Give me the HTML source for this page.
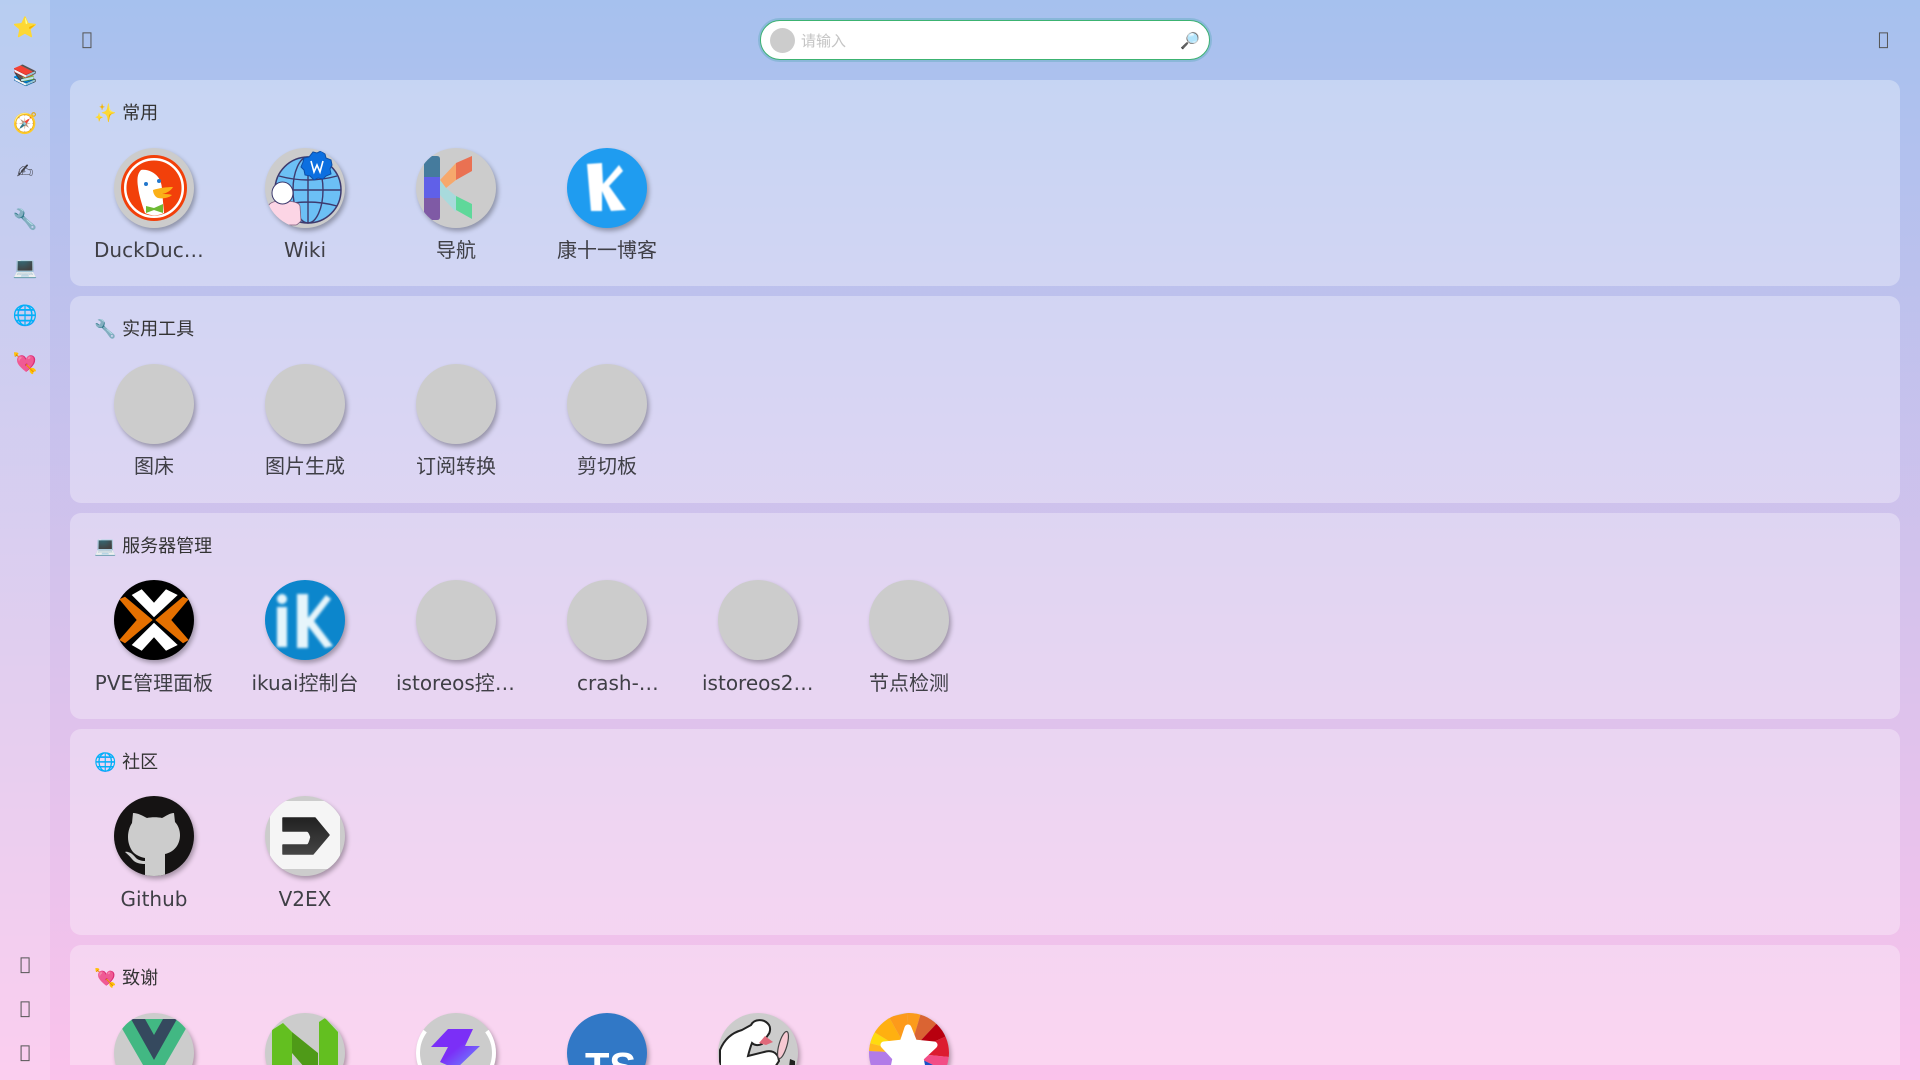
<!DOCTYPE html>
<html lang="zh"><head><meta charset="utf-8"><title>导航</title>
<style>
*{box-sizing:border-box;margin:0;padding:0}
html,body{width:1920px;height:1080px;overflow:hidden}
body{position:relative;background:linear-gradient(to bottom,#a6c1ee,#fbc2eb);font-family:"DejaVu Sans","Noto Sans CJK SC",sans-serif;color:#3f3f46}
.side{position:absolute;left:0;top:0;width:50px;height:1080px;background:rgba(255,255,255,.2)}
.side span{position:absolute;left:0;width:50px;text-align:center;font-size:20px;line-height:24px}
.side .t{font-size:18px;color:#555}
.tf{position:absolute;font-size:18px;line-height:24px;color:#555}
.search{position:absolute;left:760px;top:20px;width:450px;height:40px;background:#fff;border:1px solid #3cb371;border-radius:20px;box-shadow:0 0 0 2px rgba(100,170,190,.45)}
.search i{position:absolute;left:9px;top:7px;width:25px;height:25px;border-radius:50%;background:#ccc}
.search b{position:absolute;left:40px;top:9px;font-weight:400;font-size:15px;line-height:22px;color:#c4c4c4}
.search u{position:absolute;right:9px;top:8px;font-size:16px;line-height:24px;text-decoration:none}
.main{position:absolute;left:70px;top:80px;width:1830px;height:985px;overflow:hidden}
.card{position:relative;height:206.25px;margin-bottom:10px;background:rgba(255,255,255,.32);border-radius:11px}
.card h3{position:absolute;left:24px;top:21px;font-size:18px;line-height:26px;font-weight:400;color:#333;white-space:pre}
.it{position:absolute;top:67.5px;width:120px;margin-left:-1px}
.ic{display:block;width:80px;height:80px;margin-left:20px;border-radius:50%;background:#ccc;overflow:hidden;box-shadow:2px 3px 5px rgba(0,0,0,.3)}
.ic svg{display:block;width:80px;height:80px}
.it p{margin-top:8.5px;font-size:20px;line-height:28px;text-align:center;white-space:nowrap;overflow:hidden;text-overflow:ellipsis}
</style></head><body>
<div class="side">
<span style="top:15px">⭐</span><span style="top:63px">📚</span><span style="top:111px">🧭</span><span style="top:159px">✍</span><span style="top:207px">🔧</span><span style="top:255px">💻</span><span style="top:303px">🌐</span><span style="top:351px">💘</span>
<span class="t" style="top:953px">&#xe6a0;</span><span class="t" style="top:997px">&#xe6a1;</span><span class="t" style="top:1041px">&#xe6a2;</span>
</div>
<span class="tf" style="left:81.500px;top:28px">&#xe6a3;</span>
<span class="tf" style="left:1878px;top:28px">&#xe6a4;</span>
<div class="search"><i></i><b>请输入</b><u>🔎</u></div>
<div class="main">

<div class="card"><h3>✨ 常用</h3>
<div class="it" style="left:25px"><span class="ic"><svg viewBox="0 0 80 80"><circle cx="40" cy="40" r="33" fill="#f2400a"/><circle cx="40" cy="40" r="28.800" fill="none" stroke="#fff" stroke-width="2.500"/><path d="M27 22c6-1 13 2 17 7 3 4 4 9 4 13l2 23c-6 3-13 3-19 0-3-8-6-18-7-26-1-7-1-13 3-17z" fill="#fff"/><circle cx="32" cy="36" r="2" fill="#2277cc"/><circle cx="45" cy="33" r="2" fill="#2277cc"/><path d="M39 42c6-2 14-3 20-3-2 4-8 7-12 7 4 0 8 0 11 1-3 3-10 4-14 3-3-1-5-5-5-8z" fill="#fbb017"/><path d="M32 58l8 2 9-4v9l-9-3-8 3z" fill="#6eba34"/></svg></span><p>DuckDuckGo</p></div>
<div class="it" style="left:176px"><span class="ic"><svg viewBox="0 0 80 80"><circle cx="43" cy="42" r="33" fill="#6cc0f5" stroke="#3d3a6e" stroke-width="1.500"/><g fill="none" stroke="#3d3a6e" stroke-width="1.400"><ellipse cx="43" cy="42" rx="15" ry="33"/><path d="M43 9v66M14 28q29 8 58 0M10 42h66M14 58q29-8 58 0"/></g><path d="M3 60c0-5 6-7 14-7s17 1 18 5l1 15c-2 2-4 4-5 4H13C7 75 3 68 3 60z" fill="#fcd5e5" stroke="#7c5b7c" stroke-width=".8"/><ellipse cx="17.500" cy="45" rx="10.500" ry="11" fill="#fff" stroke="#3d3a6e" stroke-width="1"/><path d="M48 4l4 1 4-2 4 3 1 4 5 2 1 5-2 4 1 5-5 2-3 3-5-1-4 2-4-4-5-1-1-5-3-3 2-5 1-4 5-1z" fill="#0c6fe0" stroke="#0d4ea6" stroke-width="1"/><path d="M46 13l3 11 3-7 3 7 3-11" fill="none" stroke="#fff" stroke-width="1.600"/></svg></span><p>Wiki</p></div>
<div class="it" style="left:327px"><span class="ic"><svg viewBox="0 0 80 80"><path d="M8 8h13q3 0 3 3v18H8z" fill="#457b9d"/><path d="M8 29h16v21H8z" fill="#6060e8"/><path d="M8 50h16v19q0 3-3 3h-8q-5-2-5-8z" fill="#7f5aa5"/><path d="M24 32l16-17v17l-10 8z" fill="#f6a86c"/><path d="M40 15l16-7v15l-16 9z" fill="#ea7152"/><path d="M24 32l6 8 10 8v16L24 47z" fill="#a8dadc"/><path d="M40 48l16 8v15l-16-9z" fill="#5fd89a"/></svg></span><p>导航</p></div>
<div class="it" style="left:478px"><span class="ic" style="background:#1f9cf0"><svg viewBox="0 0 80 80"><defs><filter id="bk"><feGaussianBlur stdDeviation=".8"/></filter></defs><path d="M20 16l15-1 1 21 16-19 4 6-14 15 17 24-15 1-9-20v20H24z" fill="#fff" filter="url(#bk)"/></svg></span><p>康十一博客</p></div>
</div>

<div class="card"><h3>🔧 实用工具</h3>
<div class="it" style="left:25px"><span class="ic"></span><p>图床</p></div>
<div class="it" style="left:176px"><span class="ic"></span><p>图片生成</p></div>
<div class="it" style="left:327px"><span class="ic"></span><p>订阅转换</p></div>
<div class="it" style="left:478px"><span class="ic"></span><p>剪切板</p></div>
</div>

<div class="card"><h3>💻 服务器管理</h3>
<div class="it" style="left:25px"><span class="ic" style="background:#000"><svg viewBox="0 0 80 80"><path d="M17.700 15l10-5.700L40 22.700 52 9.300 63.700 15 40 37.300zM17.700 65l10 5.700L40 57.300 52 70.700 63.700 65 40 42.700z" fill="#fff"/><path d="M5.300 19.300L11 16.700 38.700 40 11 63.300 5.300 60 22.700 40zM74.700 19.300L69 16.700 41.300 40 69 63.300 74.700 60 57.300 40z" fill="#e57000"/></svg></span><p>PVE管理面板</p></div>
<div class="it" style="left:176px"><span class="ic" style="background:#0c86cc"><svg viewBox="0 0 80 80"><defs><filter id="ik"><feGaussianBlur stdDeviation="1.300"/></filter></defs><g fill="#e6f5fb" filter="url(#ik)"><circle cx="17" cy="19" r="5"/><path d="M12 27h10v40H12zM32 14h11v24l18-23 5 4-17 22 19 25-8 2-17-22v22H32z"/></g></svg></span><p>ikuai控制台</p></div>
<div class="it" style="left:327px"><span class="ic"></span><p>istoreos控制台</p></div>
<div class="it" style="left:478px"><span class="ic"></span><p style="padding-left:30px;text-align:left">crash-…</p></div>
<div class="it" style="left:629px"><span class="ic"></span><p style="padding-left:4px">istoreos2控制台</p></div>
<div class="it" style="left:780px"><span class="ic"></span><p>节点检测</p></div>
</div>

<div class="card"><h3>🌐 社区</h3>
<div class="it" style="left:25px"><span class="ic" style="background:#151313"><svg viewBox="0 0 80 80"><path d="M19 17c5 0 10 3 14 5 4-1 11-1 15 0 4-2 8-5 12-5l1 9c3 3 5 8 5 13 0 10-6 17-15 19v22H31V62c-5-1-9-3-12-6-3-4-5-9-5-15 0-6 2-11 4-14z" fill="#ccc"/><path d="M11 56c4-1 8 2 11 6 2 2 6 3 9 3v3c-5 0-10-1-13-5-2-3-5-5-7-7z" fill="#ccc"/></svg></span><p>Github</p></div>
<div class="it" style="left:176px"><span class="ic"><svg viewBox="0 0 80 80"><defs><linearGradient id="vg" x1="0" y1="0" x2="0" y2="1"><stop offset="0" stop-color="#222"/><stop offset="1" stop-color="#444"/></linearGradient></defs><rect x="5" y="5" width="70" height="68" rx="4" fill="#f5f5f5"/><path d="M18 22h32l14 17-16 19H18V49h24q2 0 4-8-2-6-4-6H18z" fill="url(#vg)" stroke="url(#vg)" stroke-width="1.500" stroke-linejoin="round"/></svg></span><p>V2EX</p></div>
</div>

<div class="card"><h3>💘 致谢</h3>
<div class="it" style="left:25px"><span class="ic"><svg viewBox="0 0 80 80"><path d="M2.500 6h75L40 71z" fill="#42b883"/><path d="M17 6h14l9 16 9-16h14L40 47z" fill="#35495e"/></svg></span><p>Vue</p></div>
<div class="it" style="left:176px"><span class="ic"><svg viewBox="0 0 80 80"><path d="M7 17l11-7 9 9v55H7z" fill="#63bf20"/><path d="M54 9l6-4 13 14v55H54z" fill="#63bf20"/><path d="M27 19l26 21v30L27 40z" fill="#4f9a18"/></svg></span><p>Naive UI</p></div>
<div class="it" style="left:327px"><span class="ic"><svg viewBox="0 0 80 80"><defs><linearGradient id="bg" x1="0" y1="0" x2="1" y2="1"><stop offset=".5" stop-color="#7b2ff7"/><stop offset="1" stop-color="#6a9cff"/></linearGradient></defs><path d="M9 18A37 37 0 0 0 9 62M71 18A37 37 0 0 1 71 62" fill="none" stroke="#fff" stroke-width="4.500"/><path d="M32 16h25l-8 17h15L40 56l-16-7 8-15H15z" fill="url(#bg)"/></svg></span><p>Vite</p></div>
<div class="it" style="left:478px"><span class="ic" style="background:#3178c6"><svg viewBox="0 0 80 80"><text x="18" y="67.500" font-family="Liberation Sans" font-weight="700" font-size="40" fill="#fff">TS</text></svg></span><p>TypeScript</p></div>
<div class="it" style="left:629px"><span class="ic"><svg viewBox="0 0 80 80"><path d="M2 80V37C6 27 13 20 24 17l9-5c3-6 13-7 18 0 2 3 1 8-1 10l-6 9c-4 2-8 1-10-1-2 5-3 9-4 13l16-4c6-2 14-1 15 9L40 80z" fill="#fff" stroke="#222" stroke-width="2"/><path d="M47 23l8 6-7 3-7-2z" fill="#e0697a"/><ellipse cx="65" cy="32" rx="4" ry="14" transform="rotate(16 65 32)" fill="#f7c9d2" stroke="#444" stroke-width="1.200"/><path d="M72 46l5 2v6h-6z" fill="#222"/></svg></span><p>Pinia</p></div>
<div class="it" style="left:780px"><span class="ic"><svg viewBox="0 0 80 80"><path d="M40 40L38 0h14z" fill="#fb9b1c"/><path d="M40 40L52 0l18 8z" fill="#da6433"/><path d="M40 40L70 8l10 14z" fill="#b8000f"/><path d="M40 40l40-18v22z" fill="#dc1c30"/><path d="M40 40l40 4v16z" fill="#f24d87"/><path d="M40 40l40 20-20 20H40z" fill="#1b4fc8"/><path d="M40 40V80H14z" fill="#7058c0"/><path d="M40 40L14 80H0V38z" fill="#b27be8"/><path d="M40 40L0 38V30z" fill="#ffb71e"/><path d="M40 40L0 30V16z" fill="#ffdb0e"/><path d="M40 40L0 16 20 4z" fill="#ffb010"/><path d="M40 40L20 4 38 0z" fill="#fd9a1a"/><path d="M39 15l6 15 20 2-14 13 4 20-16-10-16 10 4-20-12-13 19-2z" fill="#fff" stroke="#fff" stroke-width="7" stroke-linejoin="round"/></svg></span><p>Star</p></div>
</div>

</div>
</body></html>
